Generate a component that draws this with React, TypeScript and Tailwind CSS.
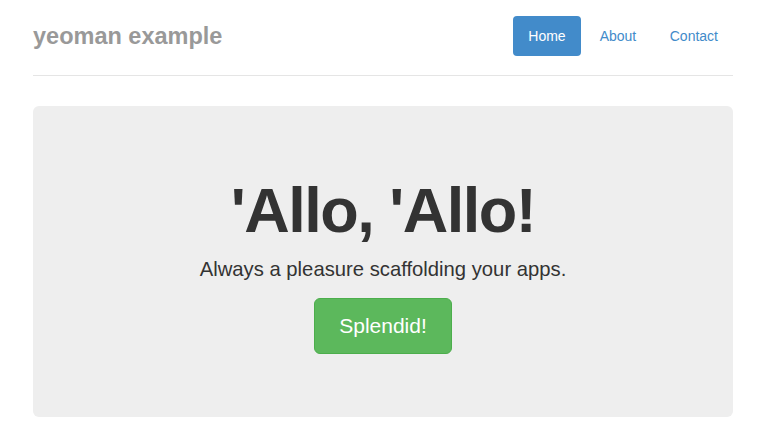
export default function App() {
  const links = ['Home', 'About', 'Contact'];

  return (
    <div className="min-h-screen bg-white text-[#333] font-['Liberation_Sans',Arial,sans-serif]">
      <div className="mx-[33px] w-[700px]">
        <div className="flex items-start justify-between pt-[16px] pb-[19px] border-b border-[#e5e5e5]">
          <h3 className="text-[23.5px] leading-[40px] font-bold text-[#999]">yeoman example</h3>
          <ul className="flex gap-[3.5px]">
            {links.map((l, i) => (
              <li key={l}>
                <a
                  href="#"
                  className={
                    i === 0
                      ? 'block px-[15.5px] py-[10px] text-[14px] leading-[20px] rounded-[4px] bg-[#428bca] text-white'
                      : 'block px-[15px] py-[10px] text-[14px] leading-[20px] rounded-[4px] text-[#428bca]'
                  }
                >
                  {l}
                </a>
              </li>
            ))}
          </ul>
        </div>

        <div className="mt-[30px] rounded-[6px] bg-[#eee] pt-[70px] pb-[63px] text-center">
          <h1 className="text-[63px] leading-[69px] font-bold tracking-[-1.5px] mb-[10px]">'Allo, 'Allo!</h1>
          <p className="text-[20.25px] leading-[29px] mb-[13.5px]">Always a pleasure scaffolding your apps.</p>
          <a
            href="#"
            className="inline-block px-[24px] py-[13px] text-[21px] leading-[28px] text-white bg-[#5cb85c] border border-[#4cae4c] rounded-[6px]"
          >
            Splendid!
          </a>
        </div>
      </div>
    </div>
  );
}
